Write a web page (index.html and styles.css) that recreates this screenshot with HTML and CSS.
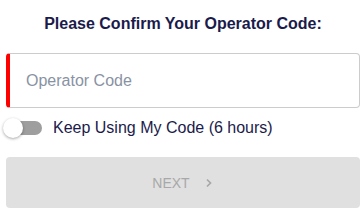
FILE: index.html
```html
<!DOCTYPE html>
<html lang="en">
<head>
  <meta charset="UTF-8">
  <meta name="viewport" content="width=device-width, initial-scale=1.0">
  <title>Operator Code</title>
  <link rel="stylesheet" href="styles.css">
</head>
<body>
  <main class="confirm">
    <h1>Please Confirm Your Operator Code:</h1>

    <div class="code-field">
      <input type="text" id="operatorCode" placeholder="Operator Code">
    </div>

    <label class="keep-code">
      <span class="switch">
        <span class="switch-track"></span>
        <span class="switch-knob"></span>
      </span>
      <span>Keep Using My Code (6 hours)</span>
    </label>

    <button type="button" class="next-btn" disabled>
      NEXT
      <svg class="chevron" width="10" height="10" viewBox="0 0 10 10">
        <path d="M3 1.5 L6.5 5 L3 8.5" fill="none" stroke="currentColor" stroke-width="1.7"/>
      </svg>
    </button>
  </main>
</body>
</html>
```

FILE: styles.css
```css
:root {
  --text-primary: #1b1b4b;
  --border-color: #cccccc;
  --error: #ff0000;
  --disabled-bg: #e0e0e0;
  --disabled-text: #a8a8a8;
  --radius: 4px;
}

* {
  box-sizing: border-box;
}

body {
  margin: 0;
  color: var(--text-primary);
  font-family: "Liberation Sans", Arial, sans-serif;
  font-size: 16px;
  background-color: #ffffff;
}

.confirm {
  padding: 0 4px 0 6px;
}

h1 {
  margin: 0;
  padding-top: 14px;
  font-size: 16px;
  line-height: 20px;
  text-align: center;
}

.code-field {
  margin-top: 19px;
}

input {
  display: block;
  width: 100%;
  height: 55px;
  padding: 0 0 0 16px;
  border: 1px solid var(--border-color);
  border-left: 4px solid var(--error);
  border-radius: var(--radius);
  font-family: inherit;
  font-size: 16px;
  color: var(--text-primary);
  outline: none;
}

input::placeholder {
  color: #8992a3;
}

.keep-code {
  display: flex;
  align-items: center;
  gap: 11px;
  margin-top: 10px;
  height: 20px;
  margin-left: -3px;
}

.switch {
  position: relative;
  width: 39px;
  height: 20px;
  flex: none;
}

.switch-track {
  position: absolute;
  left: 6px;
  right: 0;
  top: 3px;
  height: 14px;
  border-radius: 7px;
  background-color: #9e9e9e;
}

.switch-knob {
  position: absolute;
  left: 0;
  top: 0;
  width: 20px;
  height: 20px;
  border-radius: 50%;
  background-color: #ffffff;
  box-shadow: 0 1px 3px rgba(0, 0, 0, 0.35);
}

.next-btn {
  display: flex;
  align-items: center;
  justify-content: center;
  gap: 14px;
  width: 100%;
  height: 51px;
  margin-top: 19px;
  border: none;
  border-radius: var(--radius);
  background-color: var(--disabled-bg);
  color: var(--disabled-text);
  font-family: inherit;
  font-size: 14px;
}
```
